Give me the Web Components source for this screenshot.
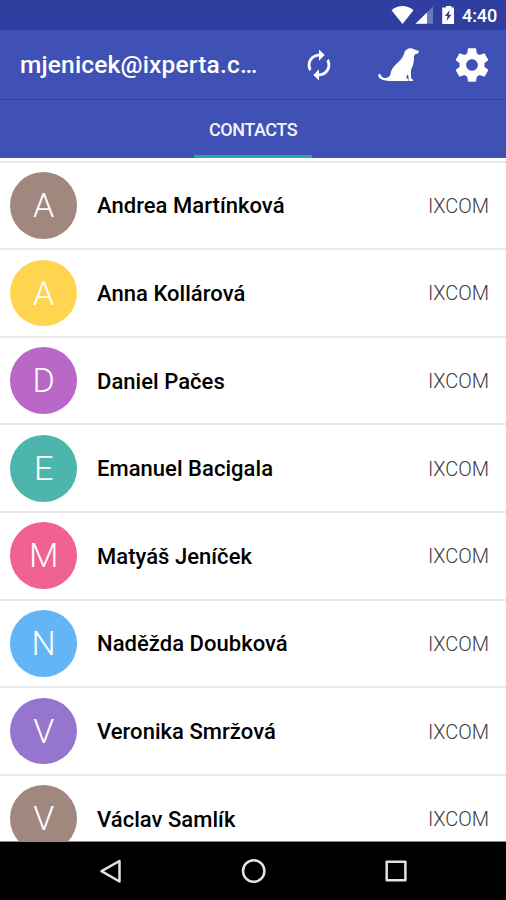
<!DOCTYPE html>
<html lang="cs">
<head>
<meta charset="utf-8">
<title>Contacts</title>
<style>
html,body{margin:0;padding:0}
body{font-family:Roboto,"Noto Sans",sans-serif;width:506px;height:900px;overflow:hidden;background:#fff}
</style>
</head>
<body>
<phone-screen></phone-screen>
<script>
const define = (name, html, setup) => customElements.define(name, class extends HTMLElement {
  connectedCallback() {
    if (this.shadowRoot) return;
    this.attachShadow({mode: 'open'}).innerHTML = html;
    if (setup) setup(this, this.shadowRoot);
  }
});

define('status-bar', `<style>
:host{display:flex;height:30px;box-sizing:border-box;background:#303f9f;color:#fff;align-items:center;justify-content:flex-end;padding-right:9px}
svg{display:block}
.clock{font-size:18px;font-weight:500;line-height:30px;width:35px;white-space:nowrap;margin-left:4px;padding-top:2px;letter-spacing:-.1px}
</style>
<svg width="67" height="30" viewBox="0 0 67 30" fill="#fff">
<path d="M.5 10.200Q11.500 1.800 22.500 10.200L11.500 24Z"/>
<path d="M24.500 23.800L42 6.500V23.800Z" opacity=".3"/>
<path d="M24.500 23.800L36 12.400V23.800Z"/>
<path fill-rule="evenodd" d="M52.500 7.500H55V6H60.500V7.500H63V24H51.200V7.500ZM58.800 10L53.800 16H56.600L55.500 21L60.600 14.700H57.800Z"/>
</svg><span class="clock">4:40</span>`);

define('app-bar', `<style>
:host{display:flex;height:70px;box-sizing:border-box;background:#3f51b5;color:#fff;align-items:center;padding:0 14px 0 20px;border-bottom:1px solid #35459f}
.title{font-size:24.500px;font-weight:500;line-height:70px;width:240px;white-space:nowrap;flex:none;letter-spacing:.17px;padding-top:1px;box-sizing:border-box}
.icons{flex:1;display:flex;align-items:center;padding-left:42px}
svg{display:block;fill:#fff;flex:none}
.dog{margin-left:42px}
.gear{margin-left:auto}
</style>
<span class="title">mjenicek@ixperta.c…</span>
<div class="icons">
<svg width="34" height="34" viewBox="0 0 24 24"><path d="M12 6v3l4-4-4-4v3c-4.420 0-8 3.580-8 8 0 1.570.46 3.030 1.240 4.260L6.700 14.800A5.870 5.870 0 0 1 6 12c0-3.310 2.690-6 6-6zm6.760 1.740L17.300 9.200c.44.840.7 1.790.7 2.800 0 3.310-2.690 6-6 6v-3l-4 4 4 4v-3c4.420 0 8-3.580 8-8 0-1.570-.46-3.030-1.240-4.260z"/></svg>
<svg class="dog" width="42" height="50" viewBox="22 0 126 150"><path d="M101 38C104 29 112 24 122 25L131 28L134 30L144 32C146 37 141 42 133 43L130 49C130 60 130 70 125 80L121 90L121 115C125 117 128 119 127 123L115 123L112 103L108 108L107 115C113 117 115 120 113 123L64 123C51 124 35 122 27 115C22 110 21 103 26 101C31 101 30 110 39 113C47 116 54 112 59 105C60 91 68 80 80 69C92 58 98 50 101 38Z"/></svg>
<svg class="gear" width="40" height="40" viewBox="0 0 24 24"><path d="M19.430 12.980c.04-.32.07-.64.07-.98s-.03-.66-.07-.98l2.110-1.650c.19-.15.24-.42.12-.64l-2-3.460c-.12-.22-.39-.3-.61-.22l-2.490 1c-.52-.4-1.080-.73-1.690-.98l-.38-2.650A.488.488 0 0 0 14 2h-4c-.25 0-.46.18-.49.42l-.38 2.650c-.61.25-1.170.59-1.690.98l-2.490-1c-.23-.09-.49 0-.61.22l-2 3.460c-.13.22-.07.49.12.64l2.110 1.650c-.04.32-.07.65-.07.98s.03.66.07.98l-2.110 1.650c-.19.15-.24.42-.12.64l2 3.460c.12.22.39.3.61.22l2.490-1c.52.4 1.080.73 1.690.98l.38 2.650c.03.24.24.42.49.42h4c.25 0 .46-.18.49-.42l.38-2.650c.61-.25 1.170-.59 1.690-.98l2.490 1c.23.09.49 0 .61-.22l2-3.460c.12-.22.07-.49-.12-.64l-2.110-1.650zM12 15.500c-1.930 0-3.500-1.570-3.500-3.500s1.570-3.500 3.500-3.500 3.500 1.570 3.500 3.500-1.570 3.500-3.500 3.500z"/></svg>
</div>`);

define('tab-bar', `<style>
:host{display:flex;height:58px;background:#3f51b5;color:#f3f4fb;justify-content:center}
.tab{box-sizing:border-box;width:118px;height:58px;border-bottom:3px solid #25ab9d;text-align:center;font-size:18px;font-weight:500;line-height:59px;white-space:nowrap;letter-spacing:-.45px}
</style><div class="tab"><slot></slot></div>`);

define('contact-row', `<style>
:host{display:flex;height:87.640px;box-sizing:border-box;align-items:center;border-top:2px solid #e8e8e8;padding:0 17px 0 10.300px;flex:none}
.avatar{width:66.700px;height:66.700px;border-radius:50%;background:var(--tint);color:#fff;font-size:34px;font-weight:300;line-height:67px;text-align:center;flex:none}
.name{margin-left:20px;flex:1;font-size:22px;font-weight:500;color:#000;white-space:nowrap;letter-spacing:.04px;padding-top:1px}
.group{font-size:20px;font-weight:300;color:#3c3c3c;white-space:nowrap;padding-top:1px;letter-spacing:-.05px}
</style><div class="avatar"></div><span class="name"><slot></slot></span><span class="group">IXCOM</span>`,
(el, root) => {
  root.querySelector('.avatar').textContent = el.textContent.trim()[0];
  el.style.setProperty('--tint', el.getAttribute('tint'));
});

define('contact-list', `<style>
:host{display:flex;flex-direction:column;height:684px;box-sizing:border-box;padding-top:2.500px;overflow:hidden;background:#fff;border-bottom:1px solid #888}
</style><slot></slot>`);

define('nav-bar', `<style>
:host{display:flex;height:58px;background:#000;justify-content:center;align-items:center;gap:114px}
svg{display:block;fill:none;stroke:#e2e2e2;stroke-width:2.500;stroke-linejoin:round}
</style>
<svg width="28" height="28" viewBox="0 0 28 28"><path d="M22.500 4V24.500L4.500 14.200Z"/></svg>
<svg width="28" height="28" viewBox="0 0 28 28"><circle cx="14.700" cy="14" r="10.700"/></svg>
<svg width="28" height="28" viewBox="0 0 28 28"><rect x="5.700" y="4.700" width="18.700" height="18.500"/></svg>`);

define('phone-screen', `<style>:host{display:flex;flex-direction:column;width:506px;height:900px}</style>
<status-bar></status-bar><app-bar></app-bar><tab-bar>CONTACTS</tab-bar>
<contact-list>
<contact-row tint="#a1887f">Andrea Martínková</contact-row>
<contact-row tint="#ffd54f">Anna Kollárová</contact-row>
<contact-row tint="#ba68c8">Daniel Pačes</contact-row>
<contact-row tint="#4db6ac">Emanuel Bacigala</contact-row>
<contact-row tint="#f06292">Matyáš Jeníček</contact-row>
<contact-row tint="#64b5f6">Naděžda Doubková</contact-row>
<contact-row tint="#9575cd">Veronika Smržová</contact-row>
<contact-row tint="#a1887f">Václav Samlík</contact-row>
</contact-list>
<nav-bar></nav-bar>`);
</script>
</body>
</html>
